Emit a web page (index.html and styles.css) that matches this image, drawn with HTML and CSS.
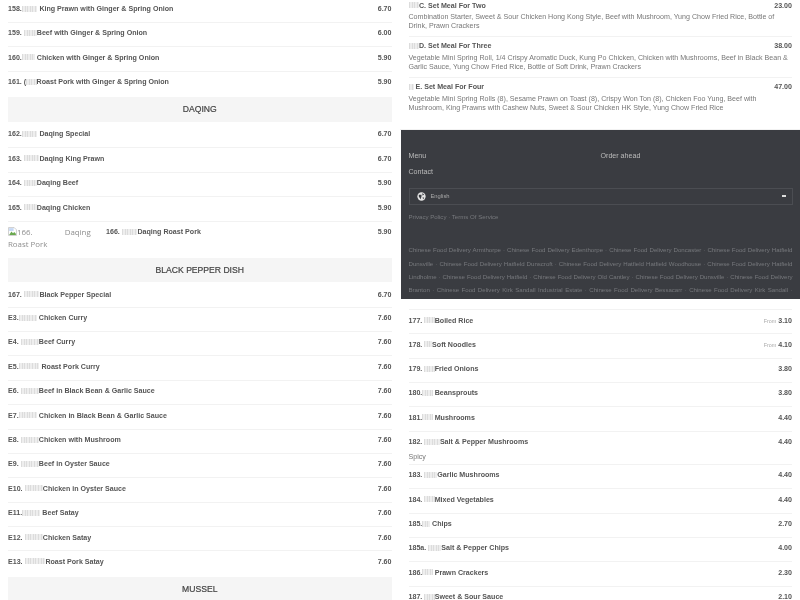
FILE: index.html
```html
<!DOCTYPE html>
<html lang="en">
  <head>
    <meta charset="UTF-8" />
    <meta name="viewport" content="width=device-width, initial-scale=1.0" />
    <title>Menu</title>
    <link rel="stylesheet" href="styles.css">
  </head>
  <body>
    <div class="page">
      <div class="col col-left">
        <div class="item"><b>158.<i class="cn c6"></i> King Prawn with Ginger &amp; Spring Onion</b><span class="price">6.70</span></div>
        <div class="item"><b>159. <i class="cn c5"></i>Beef with Ginger &amp; Spring Onion</b><span class="price">6.00</span></div>
        <div class="item"><b>160.<i class="cn c5"></i> Chicken with Ginger &amp; Spring Onion</b><span class="price">5.90</span></div>
        <div class="item item-last"><b>161. (<i class="cn c4"></i>Roast Pork with Ginger &amp; Spring Onion</b><span class="price">5.90</span></div>
        <h2 class="section">DAQING</h2>
        <div class="item"><b>162.<i class="cn c6"></i> Daqing Special</b><span class="price">6.70</span></div>
        <div class="item"><b>163. <i class="cn c6"></i>Daqing King Prawn</b><span class="price">6.70</span></div>
        <div class="item"><b>164. <i class="cn c5"></i>Daqing Beef</b><span class="price">5.90</span></div>
        <div class="item"><b>165. <i class="cn c5"></i>Daqing Chicken</b><span class="price">5.90</span></div>
        <div class="item item-img">
          <div class="broken"><svg class="broken-icon" viewBox="0 0 16 16"><path d="M1 1h10l4 4v10H1z" fill="#fff" stroke="#a9a9a9"/><path d="M2 14l4-6 3 3 2-2 3 3v2z" fill="#6aa84f"/><path d="M2 2h8v5H2z" fill="#c6d8f5"/></svg>166. <span class="broken-gap">Daqing</span> Roast Pork</div>
          <b>166. <i class="cn c6"></i>Daqing Roast Pork</b><span class="price">5.90</span>
        </div>
        <h2 class="section">BLACK PEPPER DISH</h2>
        <div class="item item-short"><b>167. <i class="cn c6"></i>Black Pepper Special</b><span class="price">6.70</span></div>
        <div class="item"><b>E3.<i class="cn c7"></i> Chicken Curry</b><span class="price">7.60</span></div>
        <div class="item"><b>E4. <i class="cn c7"></i>Beef Curry</b><span class="price">7.60</span></div>
        <div class="item"><b>E5.<i class="cn c8"></i> Roast Pork Curry</b><span class="price">7.60</span></div>
        <div class="item"><b>E6. <i class="cn c7"></i>Beef in Black Bean &amp; Garlic Sauce</b><span class="price">7.60</span></div>
        <div class="item"><b>E7.<i class="cn c7"></i> Chicken in Black Bean &amp; Garlic Sauce</b><span class="price">7.60</span></div>
        <div class="item"><b>E8. <i class="cn c7"></i>Chicken with Mushroom</b><span class="price">7.60</span></div>
        <div class="item"><b>E9. <i class="cn c7"></i>Beef in Oyster Sauce</b><span class="price">7.60</span></div>
        <div class="item"><b>E10. <i class="cn c7"></i>Chicken in Oyster Sauce</b><span class="price">7.60</span></div>
        <div class="item"><b>E11.<i class="cn c7"></i> Beef Satay</b><span class="price">7.60</span></div>
        <div class="item"><b>E12. <i class="cn c7"></i>Chicken Satay</b><span class="price">7.60</span></div>
        <div class="item item-last"><b>E13. <i class="cn c8"></i>Roast Pork Satay</b><span class="price">7.60</span></div>
        <h2 class="section">MUSSEL</h2>
      </div>

      <div class="col col-right">
        <div class="meals">
          <div class="meal">
            <div class="meal-top"><b><i class="cn c4"></i>C. Set Meal For Two</b><span class="price">23.00</span></div>
            <p>Combination Starter, Sweet &amp; Sour Chicken Hong Kong Style, Beef with Mushroom, Yung Chow Fried Rice, Bottle of Drink, Prawn Crackers</p>
          </div>
          <div class="meal">
            <div class="meal-top"><b><i class="cn c4"></i>D. Set Meal For Three</b><span class="price">38.00</span></div>
            <p>Vegetable Mini Spring Roll, 1/4 Crispy Aromatic Duck, Kung Po Chicken, Chicken with Mushrooms, Beef in Black Bean &amp; Garlic Sauce, Yung Chow Fried Rice, Bottle of Soft Drink, Prawn Crackers</p>
          </div>
          <div class="meal">
            <div class="meal-top"><b><i class="cn c2"></i> E. Set Meal For Four</b><span class="price">47.00</span></div>
            <p>Vegetable Mini Spring Rolls (8), Sesame Prawn on Toast (8), Crispy Won Ton (8), Chicken Foo Yung, Beef with Mushroom, King Prawns with Cashew Nuts, Sweet &amp; Sour Chicken HK Style, Yung Chow Fried Rice</p>
          </div>
        </div>

        <footer class="footer">
          <div class="footer-links">
            <a>Menu</a>
            <a>Order ahead</a>
            <a>Contact</a>
          </div>
          <div class="lang">
            <svg width="9" height="9" viewBox="0 0 10 10"><circle cx="5" cy="5" r="4.6" fill="#e4e4e4"/><path d="M2 3h3v2l-1 3-2-3zM6 1l2 2-2 1zM6 6h2l-1 2z" fill="#3a3c41"/></svg>
            <span>English</span>
            <span class="caret"></span>
          </div>
          <div class="legal">Privacy Policy <span class="sep">·</span> Terms Of Service</div>
          <div class="areas">
            <div>Chinese Food Delivery Armthorpe · Chinese Food Delivery Edenthorpe · Chinese Food Delivery Doncaster · Chinese Food Delivery Hatfield</div>
            <div>Dunsville · Chinese Food Delivery Hatfield Dunscroft · Chinese Food Delivery Hatfield Hatfield Woodhouse · Chinese Food Delivery Hatfield</div>
            <div>Lindholme · Chinese Food Delivery Hatfield · Chinese Food Delivery Old Cantley · Chinese Food Delivery Dunsville · Chinese Food Delivery</div>
            <div>Branton · Chinese Food Delivery Kirk Sandall Industrial Estate · Chinese Food Delivery Bessacarr · Chinese Food Delivery Kirk Sandall ·</div>
          </div>
        </footer>

        <div class="sides">
          <div class="item"><b>177. <i class="cn c4"></i>Boiled Rice</b><span class="price"><small>From</small> 3.10</span></div>
          <div class="item"><b>178. <i class="cn c3"></i>Soft Noodles</b><span class="price"><small>From</small> 4.10</span></div>
          <div class="item"><b>179. <i class="cn c4"></i>Fried Onions</b><span class="price">3.80</span></div>
          <div class="item"><b>180.<i class="cn c4"></i> Beansprouts</b><span class="price">3.80</span></div>
          <div class="item"><b>181.<i class="cn c4"></i> Mushrooms</b><span class="price">4.40</span></div>
          <div class="item item-note"><b>182. <i class="cn c6"></i>Salt &amp; Pepper Mushrooms</b><span class="price">4.40</span><p>Spicy</p></div>
          <div class="item"><b>183. <i class="cn c5"></i>Garlic Mushrooms</b><span class="price">4.40</span></div>
          <div class="item"><b>184. <i class="cn c4"></i>Mixed Vegetables</b><span class="price">4.40</span></div>
          <div class="item"><b>185.<i class="cn c3"></i> Chips</b><span class="price">2.70</span></div>
          <div class="item"><b>185a. <i class="cn c5"></i>Salt &amp; Pepper Chips</b><span class="price">4.00</span></div>
          <div class="item"><b>186.<i class="cn c4"></i> Prawn Crackers</b><span class="price">2.30</span></div>
          <div class="item"><b>187. <i class="cn c4"></i>Sweet &amp; Sour Sauce</b><span class="price">2.10</span></div>
        </div>
      </div>
    </div>
  </body>
</html>
```

FILE: styles.css
```css
html,
body {
  margin: 0;
  height: 600px;
  overflow: hidden;
}
body {
  font-family: "Liberation Sans", Arial, sans-serif;
  font-size: 7.1px;
  color: #555;
  background: #fff;
}
.page {
  display: grid;
  grid-template-columns: 400px 400px;
  height: 600px;
  overflow: hidden;
  filter: blur(0.3px);
}
.col {
  min-width: 0;
  height: 600px;
  overflow: hidden;
}
.col-left {
  padding: 0 8.5px 0 8px;
  box-sizing: border-box;
}
.col-left > .item:first-child {
  margin-top: -1.5px;
}
.item {
  display: flex;
  flex-wrap: wrap;
  justify-content: space-between;
  height: 24.4px;
  padding-top: 5.5px;
  box-sizing: border-box;
  border-bottom: 1px solid #f2f2f2;
  line-height: 10px;
}
.item-last {
  height: 25.8px;
  border-bottom: none;
}
.item-short {
  height: 23.2px;
}
.price {
  font-weight: bold;
}
.price small {
  font-size: 5.4px;
  font-weight: normal;
  color: #aaa;
}
.cn {
  display: inline-block;
  height: 6px;
  vertical-align: -0.5px;
  background: repeating-linear-gradient(90deg, #dcdcdc 0, #dcdcdc 1px, #eeeeee 1px, #eeeeee 2.6px);
}
.c2 { width: 5px; }
.c3 { width: 7.8px; }
.c4 { width: 10.4px; }
.c5 { width: 13px; }
.c6 { width: 15.6px; }
.c7 { width: 18.2px; }
.c8 { width: 20.8px; }
.section {
  margin: 0 0 2.3px;
  height: 24.2px;
  line-height: 24.2px;
  background: #f5f5f5;
  text-align: center;
  font-size: 8.6px;
  font-weight: normal;
  color: #444;
  -webkit-text-stroke: 0.2px #444;
}
.item-img {
  height: 36.4px;
  flex-wrap: nowrap;
  border-bottom: none;
}
.item-img b {
  flex: 1;
  padding-left: 14px;
}
.broken {
  width: 84px;
  font-family: "Open Sans", sans-serif;
  font-size: 7.9px;
  line-height: 11.5px;
  color: #8f8f8f;
}
.broken-icon {
  width: 9px;
  height: 9px;
  vertical-align: -1px;
}
.broken-gap {
  margin-left: 30px;
}
.meals {
  padding: 0.5px 8px 0 8.5px;
  height: 130px;
  box-sizing: border-box;
  border-bottom: 1px solid #f2f2f2;
}
.meal {
  padding-bottom: 6.2px;
  margin-bottom: 4.5px;
  border-bottom: 1px solid #f2f2f2;
}
.meal:last-child {
  border-bottom: none;
}
.meal-top {
  display: flex;
  justify-content: space-between;
  line-height: 10px;
}
.meal p {
  margin: 2.9px 0 0;
  line-height: 8.2px;
  color: #777;
}
.footer {
  margin-left: 1px;
  height: 169px;
  padding: 21.5px 7.5px 0 7.5px;
  box-sizing: border-box;
  background: #3a3c41;
  color: #bbb;
  overflow: hidden;
}
.footer-links {
  display: grid;
  grid-template-columns: 192px 1fr;
  row-gap: 6.5px;
  line-height: 9.5px;
  font-size: 7.1px;
}
.lang {
  display: flex;
  align-items: center;
  gap: 5px;
  height: 16.5px;
  box-sizing: border-box;
  margin-top: 11px;
  padding: 0 6px 0 7px;
  border: 1px solid #4b4d52;
  font-size: 5.8px;
  color: #aaa;
}
.caret {
  margin-left: auto;
  width: 4px;
  height: 2px;
  background: #ddd;
}
.legal {
  margin-top: 7px;
  font-size: 6.1px;
  line-height: 9px;
  color: #77797d;
}
.areas {
  margin-top: 22.8px;
  font-size: 6.1px;
  line-height: 13.3px;
  color: #77797d;
}
.areas div {
  text-align: justify;
  text-align-last: justify;
  white-space: nowrap;
}
.sides {
  margin-top: 10px;
  padding: 0 8px 0 8.5px;
}
.sides .item:first-child {
  border-top: 1px solid #f2f2f2;
  height: 25.2px;
}
.item-note {
  height: 33px;
}
.item-note p {
  flex-basis: 100%;
  margin: 2.5px 0 0;
  line-height: 8px;
  color: #777;
}
```
